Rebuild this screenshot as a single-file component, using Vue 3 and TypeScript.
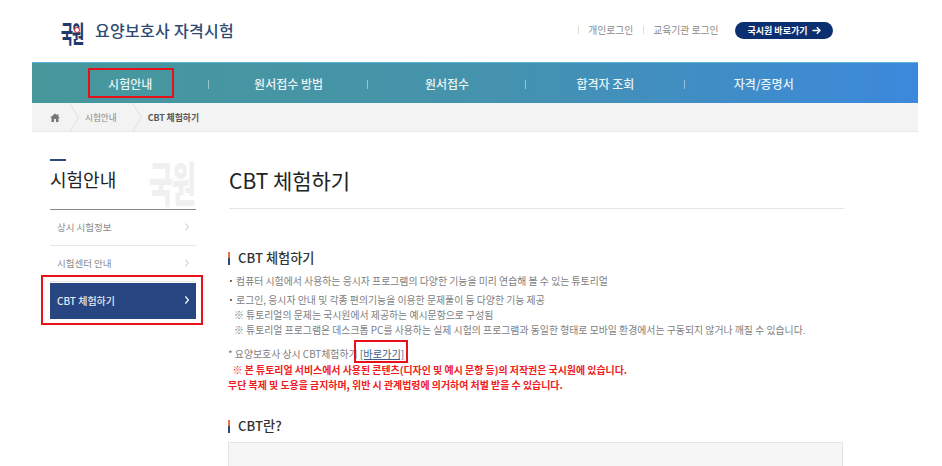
<script setup lang="ts">
const navItems: string[] = ['시험안내', '원서접수 방법', '원서접수', '합격자 조회', '자격/증명서']
const sideItems: string[] = ['상시 시험정보', '시험센터 안내']
</script>

<template>
  <div class="page">
    <header class="top">
      <div class="brand">
        <div class="logo"><span class="lg-text">국원</span><i class="ring"></i></div>
        <span class="brand-name">요양보호사 자격시험</span>
      </div>
      <div class="util">
        <span class="sep"></span>
        <span>개인로그인</span>
        <span class="sep"></span>
        <span>교육기관 로그인</span>
        <a class="go">국시원 바로가기
          <svg width="9" height="9" viewBox="0 0 9 9" fill="none" stroke="#fff" stroke-width="1.4"><path d="M.5 4.5h7.4M4.8 1.2l3.2 3.3-3.2 3.3" /></svg>
        </a>
      </div>
    </header>

    <nav class="nav">
      <div v-for="(item, i) in navItems" :key="item" class="nav-item">
        <span>{{ item }}</span>
        <i v-if="i < navItems.length - 1" class="nav-sep"></i>
        <b v-if="i === 0" class="mark nav-mark"></b>
      </div>
    </nav>

    <div class="crumb">
      <svg class="home" width="10" height="9" viewBox="0 0 11 10" fill="#777"><path d="M5.5 .5 0 5.2h1.6V10h2.8V6.6h2.2V10h2.8V5.2H11L9.2 3.6V1H8v1.5z" /></svg>
      <i class="chev"></i>
      <span class="c1">시험안내</span>
      <i class="chev"></i>
      <span class="c2">CBT 체험하기</span>
    </div>

    <div class="body">
      <aside class="side">
        <div class="side-head">
          <i class="dash"></i>
          <h2>시험안내</h2>
          <div class="wm" aria-hidden="true">국원</div>
        </div>
        <a v-for="s in sideItems" :key="s" class="side-item">
          {{ s }}
          <svg width="4" height="8" viewBox="0 0 4 8" fill="none" stroke="#c0c0c0"><path d="M.4.5l3 3.5-3 3.5" /></svg>
        </a>
        <a class="side-item active">
          CBT 체험하기
          <svg width="4" height="8" viewBox="0 0 4 8" fill="none" stroke="#fff" stroke-width="1.2"><path d="M.4.5l3 3.5-3 3.5" /></svg>
          <b class="mark side-mark"></b>
        </a>
      </aside>

      <main class="main">
        <h1>CBT 체험하기</h1>
        <h3 class="sec first">CBT 체험하기</h3>
        <p class="li l1"><b class="dot">·</b> 컴퓨터 시험에서 사용하는 응시자 프로그램의 다양한 기능을 미리 연습해 볼 수 있는 튜토리얼</p>
        <p class="li l2"><b class="dot">·</b> 로그인, 응시자 안내 및 각종 편의기능을 이용한 문제풀이 등 다양한 기능 제공</p>
        <p class="li in">※ 튜토리얼의 문제는 국시원에서 제공하는 예시문항으로 구성됨</p>
        <p class="li in">※ 튜토리얼 프로그램은 데스크톱 PC를 사용하는 실제 시험의 프로그램과 동일한 형태로 모바일 환경에서는 구동되지 않거나 깨질 수 있습니다.</p>
        <p class="li l5">* 요양보호사 상시 CBT체험하기 <a class="link">[바로가기]<b class="mark link-mark"></b></a></p>
        <p class="li red">&nbsp;&nbsp;※ 본 튜토리얼 서비스에서 사용된 콘텐츠(디자인 및 예시 문항 등)의 저작권은 국시원에 있습니다.</p>
        <p class="li red">무단 복제 및 도용을 금지하며, 위반 시 관계법령에 의거하여 처벌 받을 수 있습니다.</p>
        <h3 class="sec second">CBT란?</h3>
        <div class="box"></div>
      </main>
    </div>
  </div>
</template>

<style>
html, body { margin: 0; background: #fff; overflow: hidden; }
</style>

<style scoped>
.page {
  width: 942px;
  height: 466px;
  overflow: hidden;
  box-sizing: border-box;
  padding: 0 24px 0 32px;
  font-family: "Noto Sans CJK KR", "Noto Sans", sans-serif;
  color: #777;
  background: #fff;
}
.top {
  height: 62px;
  display: flex;
  align-items: center;
  justify-content: space-between;
  padding: 0 85px 2px 28px;
  box-sizing: border-box;
}
.brand { display: flex; align-items: center; gap: 11px; }
.logo {
  position: relative;
  width: 24px;
  height: 24px;
  margin-top: 4px;
  display: flex;
  justify-content: center;
  align-items: center;
  font-weight: 900;
  color: #1f3a6b;
  white-space: nowrap;
}
.lg-text {
  display: block;
  font-size: 13px;
  line-height: 13px;
  letter-spacing: -1px;
  transform: scaleY(1.85);
}
.ring {
  position: absolute;
  left: 14px;
  top: 7px;
  width: 6px;
  height: 6px;
  box-sizing: border-box;
  border: 1.5px solid #d8262c;
  border-radius: 50%;
  background: #fff;
}
.brand-name { font-size: 16px; font-weight: 500; color: #2c4a73; letter-spacing: .3px; }
.util { display: flex; align-items: center; font-size: 9.8px; color: #8a8a8a; }
.sep { width: 1px; height: 8px; background: #e2ddd0; margin: 0 9.5px; }
.go {
  margin-left: 16.5px;
  width: 98px;
  height: 17px;
  border-radius: 9px;
  background: #0c2f71;
  color: #fff;
  font-size: 9px;
  font-weight: 700;
  display: flex;
  align-items: center;
  justify-content: center;
  gap: 4px;
}
.nav {
  height: 41px;
  box-sizing: border-box;
  border-top: 1px solid #5fb6dc;
  padding-left: 19px;
  display: flex;
  background: linear-gradient(90deg, #46989b 0%, #4593ac 50%, #3c88dc 100%);
  color: #e9f3f5;
  font-size: 12px;
  font-weight: 500;
}
.nav-item {
  position: relative;
  width: 158.4px;
  display: flex;
  align-items: center;
  justify-content: center;
}
.nav-sep {
  position: absolute;
  right: 0;
  top: 17px;
  width: 1px;
  height: 9px;
  background: rgba(255, 255, 255, .45);
}
.mark { position: absolute; border: 2px solid #e8111a; box-sizing: border-box; }
.nav-mark { left: 37px; top: 5px; width: 86px; height: 30px; }
.crumb {
  height: 29px;
  box-sizing: border-box;
  background: #f3f3f3;
  border-bottom: 1px solid #e9e9e9;
  display: flex;
  align-items: center;
  padding-left: 18px;
  font-size: 8.6px;
  color: #888;
}
.home { margin-right: 4px; }
.chev {
  width: 20px;
  height: 20px;
  flex: none;
  border-top: 1px solid #ddd;
  border-right: 1px solid #ddd;
  transform: scaleX(.65) rotate(45deg);
  margin: 0 5px 0 -5px;
}
.c1 { margin: 0 10px 0 0; }
.c2 { font-weight: 700; color: #555; font-size: 8.8px; }
.body { display: flex; padding: 27px 0 0 18px; }
.side { width: 146px; margin-right: 33px; flex: none; }
.side-head {
  position: relative;
  height: 50px;
  border-bottom: 1px solid #888;
}
.dash { display: block; width: 16px; height: 2px; background: #2b4a83; }
.side-head h2 {
  margin: 6px 0 0;
  font-size: 18px;
  line-height: 25px;
  font-weight: 400;
  color: #222;
}
.wm {
  position: absolute;
  right: 0;
  top: 9px;
  width: 48px;
  text-align: center;
  font-size: 26px;
  line-height: 25px;
  font-weight: 900;
  color: #f0f0f0;
  letter-spacing: -1px;
  white-space: nowrap;
  transform: scaleY(1.85);
}
.side-item {
  position: relative;
  height: 36px;
  padding: 0 7px 2px;
  box-sizing: border-box;
  display: flex;
  align-items: center;
  justify-content: space-between;
  font-size: 9.5px;
  color: #8b8b8b;
  border-bottom: 1px solid #e6e6e6;
}
.side-item.active {
  background: #274681;
  color: #e4e9f2;
  font-size: 10px;
  font-weight: 500;
  border-bottom: 0;
  margin-top: 1px;
}
.side-mark { left: -9px; top: -8px; width: 162px; height: 50px; }
.main { width: 615px; }
h1 {
  margin: 0;
  height: 50px;
  box-sizing: border-box;
  border-bottom: 1px solid #e5e5e5;
  font-size: 21px;
  line-height: 42px;
  font-weight: 400;
  color: #222;
}
.sec {
  margin: 0 0 0 -1px;
  font-size: 13.2px;
  line-height: 16px;
  font-weight: 500;
  color: #333;
  padding-left: 10px;
  position: relative;
}
.sec::before {
  content: "";
  position: absolute;
  left: 0;
  top: 2px;
  width: 2px;
  height: 13px;
  background: linear-gradient(180deg, #e8743c 0 45%, #2b4a83 45%);
}
.first { margin-top: 41px; }
.second { margin-top: 26px; }
.li {
  margin: 0 0 0 -1px;
  font-size: 9.9px;
  line-height: 15px;
  height: 15px;
  color: #808080;
  white-space: nowrap;
}
.dot { color: #333; }
.l1 { margin-top: 8px; }
.l2 { margin-top: 4px; }
.in { padding-left: 6px; }
.l5 { margin-top: 9px; }
.link { position: relative; color: #3d5f85; text-decoration: underline; font-size: 10.2px; line-height: 1; }
.link-mark { left: -6px; top: -6px; width: 54px; height: 23px; }
.red { color: #f01a20; font-weight: 700; font-size: 9.93px; }
.box {
  margin: 8px 0 0 -1px;
  width: 615px;
  height: 60px;
  box-sizing: border-box;
  background: #f6f6f6;
  border: 1px solid #e4e4e4;
}
</style>
